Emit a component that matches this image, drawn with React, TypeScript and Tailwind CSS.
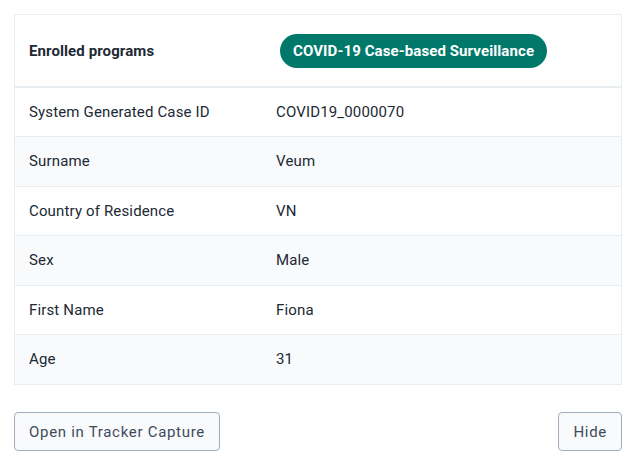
const ROWS: [string, string][] = [
  ["System Generated Case ID", "COVID19_0000070"],
  ["Surname", "Veum"],
  ["Country of Residence", "VN"],
  ["Sex", "Male"],
  ["First Name", "Fiona"],
  ["Age", "31"],
];

export default function App() {
  return (
    <div
      className="h-[466px] w-[638px] bg-white px-[14px] pt-[14px] text-[#212934]"
      style={{ fontFamily: "Roboto, 'Liberation Sans', sans-serif" }}
    >
      <div className="w-[608px] border border-[#e8edf2]">
        <div className="flex h-[73px] items-center border-b-2 border-[#e8edf2] bg-white pt-px">
          <div className="w-[261px] pl-[14px] text-[15px] font-bold tracking-[0.1px]">Enrolled programs</div>
          <span className="ml-[4px] flex h-[34px] items-center rounded-full bg-[#00796b] px-[13px] text-[15px] font-bold tracking-[0.1px] text-white">
            COVID-19 Case-based Surveillance
          </span>
        </div>
        {ROWS.map(([label, value], i) => (
          <div
            key={label}
            className={`flex h-[49.4px] items-center text-[15px] tracking-[0.15px] ${
              i < ROWS.length - 1 ? "border-b border-[#e8edf2]" : ""
            } ${i % 2 === 1 ? "bg-[#f8fafc]" : "bg-white"}`}
          >
            <div className="w-[261px] pl-[14px]">{label}</div>
            <div>{value}</div>
          </div>
        ))}
      </div>
      <div className="mt-[27px] flex w-[608px] items-center justify-between">
        <button className="h-[39px] rounded-[4px] border border-[#a0adba] bg-[#f8fafc] px-[14px] text-[15px] tracking-[0.7px] text-[#404b5a]">
          Open in Tracker Capture
        </button>
        <button className="h-[39px] rounded-[4px] border border-[#a0adba] bg-[#f8fafc] px-[14px] text-[15px] tracking-[0.7px] text-[#404b5a]">
          Hide
        </button>
      </div>
    </div>
  );
}
